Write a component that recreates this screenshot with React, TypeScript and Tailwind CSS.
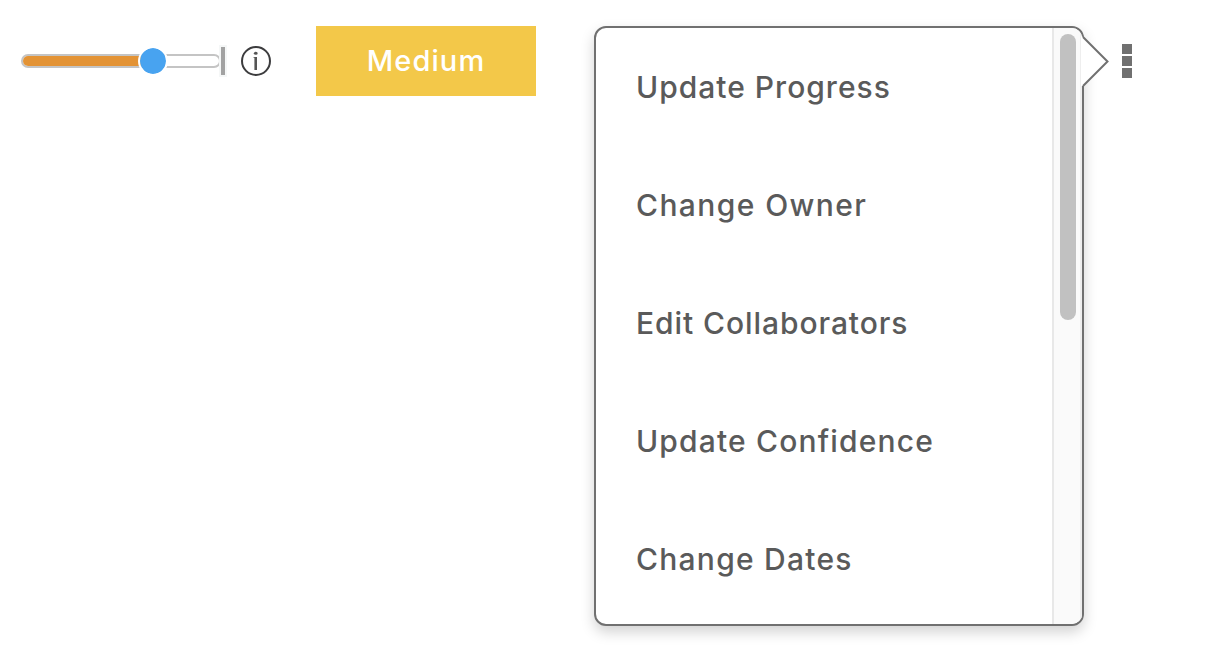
import clsx from "clsx"

const menuItems = [
  { label: "Update Progress", tracking: "tracking-[1px]" },
  { label: "Change Owner", tracking: "tracking-[1.4px]" },
  { label: "Edit Collaborators", tracking: "tracking-[0.93px]" },
  { label: "Update Confidence", tracking: "tracking-[1.16px]" },
  { label: "Change Dates", tracking: "tracking-[1.25px]" },
]

const ProgressSlider: React.FC<{ value: number }> = ({ value }) => {
  return (
    <div className="flex items-center h-[70px]">
      <div className="relative w-[200px] h-[14px] rounded-full border-2 border-[#c4c4c4] bg-white">
        <div className="h-full rounded-l-full bg-[#e39335]" style={{ width: `${value}%` }} />
        <div
          className="absolute top-1/2 size-[30px] -translate-x-1/2 -translate-y-1/2 rounded-full border-2 border-white bg-[#48a3f0] bg-clip-padding"
          style={{ left: `${value}%` }}
        />
      </div>
      <div className="relative -ml-0.5 w-2 h-8 border-2 border-[#f5f7f7] bg-[#a2a2a2]" />
    </div>
  )
}

const InfoIcon = () => (
  <svg width="30" height="30" viewBox="0 0 30 30" fill="none" className="shrink-0">
    <circle cx="15" cy="15" r="14" stroke="#3c3c3e" strokeWidth="2" />
    <ellipse cx="14.8" cy="7.2" rx="1.9" ry="1.5" fill="#555" />
    <path d="M12.5 11.5h1.5" stroke="#888" />
    <path d="M14.7 11v13" stroke="#555" strokeWidth="2.6" />
  </svg>
)

const ActionMenu = () => {
  return (
    <div className="relative w-[490px] h-[600px] shrink-0">
      <div className="flex size-full overflow-hidden rounded-xl border-2 border-[#707070] bg-white shadow-[0_6px_14px_rgba(0,0,0,0.18)]">
        <ul className="flex-1">
          {menuItems.map((item) => (
            <li key={item.label} className="flex items-center h-[118px] pl-10">
              <span className={clsx("whitespace-nowrap text-[30px] font-medium text-[#5a5a5a]", item.tracking)}>
                {item.label}
              </span>
            </li>
          ))}
        </ul>
        <div className="w-[30px] border-l-2 border-r-2 border-l-[#e8e8e8] border-r-[#eeeeee] bg-[#fafafa] px-1.5 pt-1.5">
          <div className="w-4 h-[286px] rounded-full bg-[#c1c1c1]" />
        </div>
      </div>
      <svg width="29" height="52" viewBox="0 0 29 52" className="absolute left-[487px] top-[9px]">
        <path d="M0 1L2 2L26.5 26.5L2 51H0Z" fill="#fff" />
        <path d="M2 2L26.5 26.5L2 51" fill="none" stroke="#707070" strokeWidth="2" />
      </svg>
    </div>
  )
}

export default function App() {
  return (
    <main className="flex items-start w-[1208px] h-[668px] overflow-hidden bg-white pl-[21px] pt-[26px] font-['Inter',sans-serif]">
      <ProgressSlider value={66.5} />
      <div className="flex items-center h-[70px] ml-3.5">
        <InfoIcon />
      </div>
      <button className="w-[220px] h-[70px] shrink-0 ml-[45px] bg-[#f3c849] text-[29px] font-medium tracking-[1.1px] text-white">
        Medium
      </button>
      <div className="ml-[58px]">
        <ActionMenu />
      </div>
      <div className="flex flex-col gap-0.5 ml-[38px] mt-[18px]">
        <span className="size-2.5 bg-[#707070]" />
        <span className="size-2.5 bg-[#707070]" />
        <span className="size-2.5 bg-[#707070]" />
      </div>
    </main>
  )
}
